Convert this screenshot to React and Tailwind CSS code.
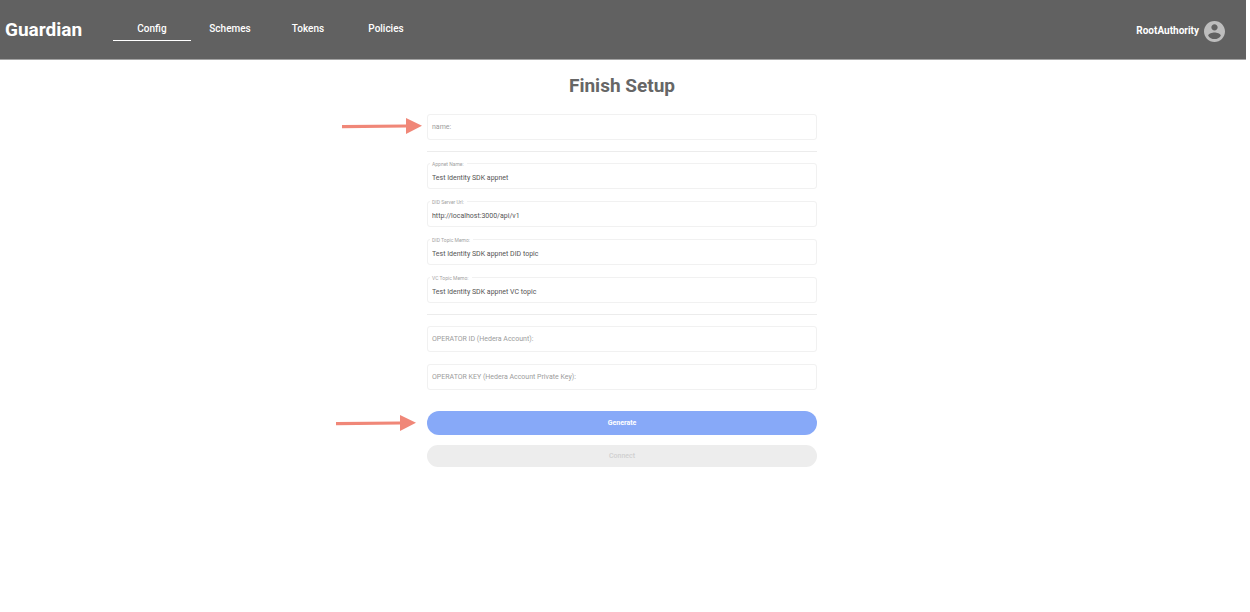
import { useState } from "react";

const tabs = ["Config", "Schemes", "Tokens", "Policies"];

function Arrow({ className }) {
  return (
    <svg className={className} width="80" height="16" viewBox="0 0 80 16" aria-hidden="true">
      <path d="M0 7 L64 6.4 V9.6 L0 10.2 Z" fill="#f08778" />
      <path d="M64 0 L80 7.8 L64 16 Z" fill="#f08778" />
    </svg>
  );
}

function Field({ id, label, defaultValue, arrow }) {
  const [value, setValue] = useState(defaultValue || "");
  const floated = value !== "";
  return (
    <div className="relative">
      {arrow && <Arrow className="absolute top-1 right-full mr-[5px]" />}
      <label
        htmlFor={id}
        className={
          floated
            ? "absolute -top-[2px] left-[3px] bg-white pr-[3px] pl-[2px] text-[5px] leading-[6px] text-[#a3a3a3]"
            : "pointer-events-none absolute inset-y-0 left-[5px] flex items-center text-[7px] leading-[8px] text-[#9c9c9c]"
        }
      >
        {label}
      </label>
      <input
        id={id}
        type="text"
        value={value}
        onChange={(e) => setValue(e.target.value)}
        className={
          "block h-[26px] w-full rounded-[3px] border border-[#f1f1f1] bg-transparent px-1 text-[7px] text-[#555] outline-none" +
          (floated ? " pt-[3px]" : "")
        }
      />
    </div>
  );
}

export default function App() {
  const [active, setActive] = useState("Config");
  return (
    <div className="min-h-screen bg-white pr-1 font-['Roboto',sans-serif]">
      <header className="flex h-[60px] items-center border-b border-[#a3a3a3] bg-[#616161] pr-[21px] pl-[5px] text-white">
        <div className="w-[108px] text-[19px] leading-[24px] font-bold">Guardian</div>
        <nav className="flex">
          {tabs.map((tab) => (
            <a
              key={tab}
              href={"#" + tab.toLowerCase()}
              onClick={() => setActive(tab)}
              className={
                "flex h-[23px] w-[78px] justify-center border-b pt-[3px] text-[10px] leading-[16px] font-medium " +
                (tab === active ? "border-white" : "border-transparent")
              }
            >
              {tab}
            </a>
          ))}
        </nav>
        <div className="ml-auto flex items-center gap-[5px] pt-[3px]">
          <span className="text-[10px] leading-[16px] font-bold">RootAuthority</span>
          <svg width="21" height="21" viewBox="2 2 20 20" fill="#bdbdbd" aria-hidden="true">
            <path d="M12 2C6.48 2 2 6.48 2 12s4.48 10 10 10 10-4.48 10-10S17.52 2 12 2zm0 3c1.66 0 3 1.34 3 3s-1.34 3-3 3-3-1.34-3-3 1.34-3 3-3zm0 14.2c-2.5 0-4.71-1.28-6-3.22.03-1.99 4-3.08 6-3.08 1.99 0 5.97 1.09 6 3.08-1.29 1.94-3.5 3.22-6 3.22z" />
          </svg>
        </div>
      </header>

      <main className="flex justify-center pt-[14px] pr-[2px]">
        <div className="w-full max-w-[390px]">
          <h1 className="text-center text-[19px] leading-[24px] font-bold text-[#666]">
            Finish Setup
          </h1>
          <form className="mt-4 flex flex-col" onSubmit={(e) => e.preventDefault()}>
            <Field id="name" label="name:" arrow />
            <hr className="my-[11px] border-[#ececec]" />
            <div className="flex flex-col gap-3">
              <Field id="appnet-name" label="Appnet Name:" defaultValue="Test Identity SDK appnet" />
              <Field id="did-server" label="DID Server Url:" defaultValue="http://localhost:3000/api/v1" />
              <Field id="did-topic" label="DID Topic Memo:" defaultValue="Test Identity SDK appnet DID topic" />
              <Field id="vc-topic" label="VC Topic Memo:" defaultValue="Test Identity SDK appnet VC topic" />
            </div>
            <hr className="my-[11px] border-[#ececec]" />
            <div className="flex flex-col gap-3">
              <Field id="operator-id" label="OPERATOR ID (Hedera Account):" />
              <Field id="operator-key" label="OPERATOR KEY (Hedera Account Private Key):" />
            </div>
            <div className="relative mt-[21px]">
              <Arrow className="absolute top-1 right-full mr-[11px]" />
              <button
                type="submit"
                className="block h-6 w-full rounded-full bg-[#87a9f8] text-[7px] font-bold text-white"
              >
                Generate
              </button>
            </div>
            <button
              type="button"
              disabled
              className="mt-[10px] h-[22px] w-full rounded-full bg-[#ededed] text-[7px] font-medium text-[#d0d0d0]"
            >
              Connect
            </button>
          </form>
        </div>
      </main>
    </div>
  );
}
